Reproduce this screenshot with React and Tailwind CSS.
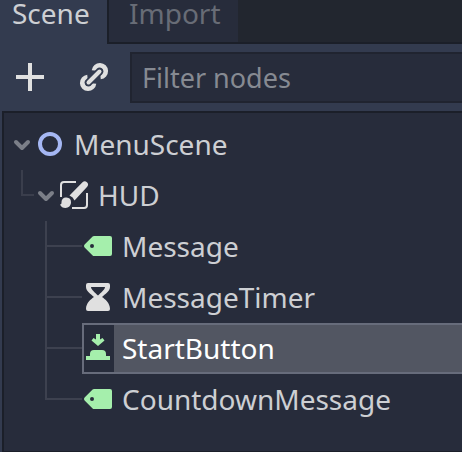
const Icon = ({ children, className = "" }) => (
  <svg viewBox="0 0 32 32" className={`block size-8 shrink-0 ${className}`} fill="none">{children}</svg>
);

const Chevron = () => (
  <svg viewBox="0 0 20 32" className="block h-8 w-5 shrink-0" fill="none" stroke="#7b7f88" strokeWidth="4" strokeLinecap="round" strokeLinejoin="round">
    <path d="M4 14l6 6 6-6" />
  </svg>
);

const LabelIcon = () => (
  <Icon>
    <path fill="#a5efac" fillRule="evenodd" d="M12 6a2 2 0 0 0-1.4.6l-8 8a2 2 0 0 0 0 2.8l8 8a2 2 0 0 0 1.4.6h16a2 2 0 0 0 2-2V8a2 2 0 0 0-2-2zm-2 8a2 2 0 1 1 0 4 2 2 0 0 1 0-4z" />
  </Icon>
);

const TimerIcon = () => (
  <Icon>
    <path fill="#e0e0e0" fillRule="evenodd" d="M6 2a2 2 0 0 0-2 2v2c0 4.500 5 7 8 10C9 18 4 22 4 28a2 2 0 0 0 2 2h20a2 2 0 0 0 2-2c0-6-5-10-8-12C23 13 28 10.500 28 6V4a2 2 0 0 0-2-2zm3 4h14c0 2.500-4 5.500-7 8.500C13 11.500 9 8.500 9 6z" />
  </Icon>
);

const ButtonIcon = () => (
  <Icon className="-ml-0.5">
    <path fill="#a5efac" d="M14 2h4v5.500l2.500-1.500 2 2.500L16 14 9.500 8.500l2-2.500L14 7.500zM8 24v-2a4 4 0 0 1 4-4h8a4 4 0 0 1 4 4v2h4v4H4v-4z" />
  </Icon>
);

const children = [
  { name: "Message", icon: <LabelIcon /> },
  { name: "MessageTimer", icon: <TimerIcon /> },
  { name: "StartButton", icon: <ButtonIcon />, selected: true },
  { name: "CountdownMessage", icon: <LabelIcon />, last: true },
];

function ChildRow({ name, icon, selected, last }) {
  return (
    <div className="flex h-[51px] pl-[41px]">
      <div className={`w-[37px] shrink-0 border-l-2 border-[#3d414f] ${last ? "h-[26px]" : "h-full"}`}>
        <div className="h-[26px] border-b-2 border-[#3d414f]" />
      </div>
      {selected ? (
        <div className="flex flex-1 border-y-2 border-l-2 border-[#676c7b] bg-[#525662] text-white">
          <div className="flex w-[30px] items-start bg-[#272c3b] pt-[7px]">{icon}</div>
          <span className="pl-2 leading-[47px]">{name}</span>
        </div>
      ) : (
        <div className="flex flex-1">
          <div className="pt-[9px]">{icon}</div>
          <span className="pl-2 leading-[51px]">{name}</span>
        </div>
      )}
    </div>
  );
}

export default function App() {
  return (
    <div className="flex h-[452px] w-[462px] flex-col overflow-hidden bg-[#333b4f] font-['Noto_Sans',sans-serif] text-[28px] whitespace-nowrap text-[#cdcfd3]">
      <div className="flex h-11 shrink-0 leading-[27px]">
        <div className="w-[107px] pl-3">Scene</div>
        <div className="flex flex-1 border-b-2 border-l-2 border-[#1b1f29] bg-[#22262f]">
          <div className="w-[129px] bg-[#272c3b] pl-5 text-[#686c76]">Import</div>
        </div>
      </div>
      <div className="flex h-[67px] shrink-0 pt-2">
        <Icon className="mt-[9px] ml-[14px]">
          <path d="M16 2v28M2 16h28" stroke="#e0e0e0" strokeWidth="4" />
        </Icon>
        <Icon className="mt-[9px] ml-8">
          <g stroke="#e0e0e0">
            <path d="M16.200 9.500A5.700 5.700 0 1 1 22.500 15.800M15.800 22.500A5.700 5.700 0 1 1 9.500 16.200" strokeWidth="5" />
            <path d="M10.500 21.500L21.500 10.500" strokeWidth="7.500" stroke="#333b4f" strokeLinecap="round" />
            <path d="M10.500 21.500L21.500 10.500" strokeWidth="4" strokeLinecap="round" />
          </g>
        </Icon>
        <div className="ml-5 h-[51px] flex-1 border-y-2 border-l-2 border-[#202430] bg-[#272c3b] pl-2.5 text-[27px] leading-[47px] text-[#868a92]">Filter nodes</div>
      </div>
      <div className="ml-0.5 h-[342px] shrink-0 border-y-2 border-l-2 border-[#1b1f29] bg-[#272c3b] pt-1.5">
        <div className="flex h-[51px] pl-2">
          <div className="pt-[9px]"><Chevron /></div>
          <Icon className="mt-[9px] ml-0.5">
            <circle cx="16" cy="16" r="10" stroke="#a5b7f3" strokeWidth="4" />
          </Icon>
          <span className="pl-2 leading-[51px]">MenuScene</span>
        </div>
        <div className="flex h-[51px] pl-[17px]">
          <div className="h-[26px] w-[13px] border-b-2 border-l-2 border-[#3a3e4c]" />
          <div className="pt-[9px] pl-0.5"><Chevron /></div>
          <Icon className="mt-[9px] ml-0.5">
            <path d="M3 18V6a3 3 0 0 1 3-3h12M29 14v12a3 3 0 0 1-3 3H14" stroke="#e0e0e0" strokeWidth="2" />
            <path fill="#e0e0e0" d="M24.500 3.200a3.300 3.300 0 0 1 4.700 4.600L16.500 21.500a8 8 0 0 0-5-5zM8.500 18.500a4.800 4.800 0 0 1 4.500 4.800c0 3.500-2.500 5.700-5.500 5.700-2.500 0-4.500-1-5.500-3.500 1.500 0 1.500-1 1.500-2.500C3.500 20 6 18 8.500 18.500z" />
          </Icon>
          <span className="pl-2 leading-[51px]">HUD</span>
        </div>
        {children.map((child) => <ChildRow key={child.name} {...child} />)}
      </div>
    </div>
  );
}
